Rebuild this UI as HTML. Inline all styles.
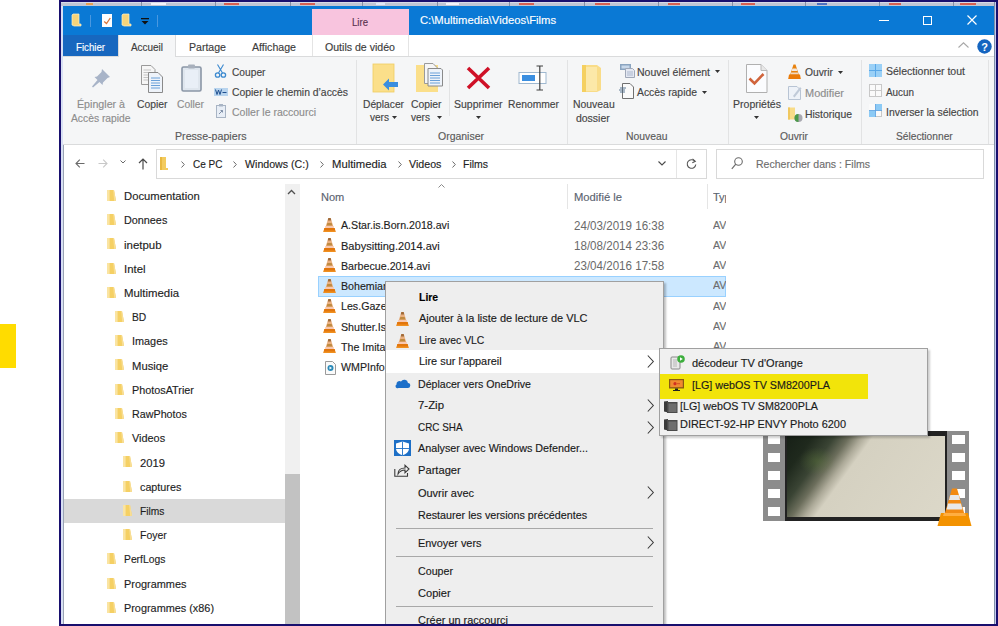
<!DOCTYPE html>
<html><head><meta charset="utf-8"><style>
html,body{margin:0;padding:0;width:998px;height:626px;overflow:hidden;background:#fff;position:relative}
.t{position:absolute;white-space:nowrap;font-family:"Liberation Sans",sans-serif;line-height:normal;transform-origin:0 0;-webkit-text-stroke:0.15px currentColor}
svg{position:absolute;overflow:visible}
</style></head><body>
<div style="position:absolute;left:0px;top:0px;width:998px;height:626px;background:#ffffff;"></div>
<div style="position:absolute;left:0px;top:324px;width:16px;height:44px;background:#FFDC00;"></div>
<div style="position:absolute;left:59px;top:0px;width:939px;height:626px;background:#180f6e;"></div>
<div style="position:absolute;left:61px;top:2px;width:935px;height:622px;background:#ffffff;"></div>
<div style="position:absolute;left:61px;top:2px;width:2px;height:622px;background:#d8e0f4;"></div>
<div style="position:absolute;left:63px;top:6px;width:1px;height:618px;background:#9aa4b4;"></div>
<div style="position:absolute;left:61px;top:2px;width:935px;height:4px;background:#c0c6d4;"></div>
<div style="position:absolute;left:61px;top:2px;width:935px;height:1px;background:#d8dae8;"></div>
<div style="position:absolute;left:141px;top:2px;width:1px;height:4px;background:#8890a4;"></div>
<div style="position:absolute;left:215px;top:2px;width:1px;height:4px;background:#8890a4;"></div>
<div style="position:absolute;left:290px;top:2px;width:1px;height:4px;background:#8890a4;"></div>
<div style="position:absolute;left:362px;top:2px;width:1px;height:4px;background:#8890a4;"></div>
<div style="position:absolute;left:437px;top:2px;width:1px;height:4px;background:#8890a4;"></div>
<div style="position:absolute;left:509px;top:2px;width:1px;height:4px;background:#8890a4;"></div>
<div style="position:absolute;left:584px;top:2px;width:1px;height:4px;background:#8890a4;"></div>
<div style="position:absolute;left:658px;top:2px;width:1px;height:4px;background:#8890a4;"></div>
<div style="position:absolute;left:732px;top:2px;width:1px;height:4px;background:#8890a4;"></div>
<div style="position:absolute;left:805px;top:2px;width:1px;height:4px;background:#8890a4;"></div>
<div style="position:absolute;left:879px;top:2px;width:1px;height:4px;background:#8890a4;"></div>
<div style="position:absolute;left:953px;top:2px;width:1px;height:4px;background:#8890a4;"></div>
<div style="position:absolute;left:86px;top:3px;width:7px;height:1.5px;background:#e8a050;"></div>
<div style="position:absolute;left:151px;top:3px;width:15px;height:1.5px;background:#f4f4fa;"></div>
<div style="position:absolute;left:224px;top:3px;width:15px;height:1.5px;background:#d86050;"></div>
<div style="position:absolute;left:300px;top:3px;width:15px;height:1.5px;background:#d86050;"></div>
<div style="position:absolute;left:376px;top:3px;width:9px;height:1.5px;background:#e0e8f8;"></div>
<div style="position:absolute;left:446px;top:3px;width:13px;height:1.5px;background:#f4f4fa;"></div>
<div style="position:absolute;left:519px;top:3px;width:15px;height:1.5px;background:#d86050;"></div>
<div style="position:absolute;left:595px;top:3px;width:15px;height:1.5px;background:#d86050;"></div>
<div style="position:absolute;left:668px;top:3px;width:12px;height:1.5px;background:#d86050;"></div>
<div style="position:absolute;left:741px;top:3px;width:14px;height:1.5px;background:#d86050;"></div>
<div style="position:absolute;left:817px;top:3px;width:10px;height:1.5px;background:#5070c0;"></div>
<div style="position:absolute;left:889px;top:3px;width:12px;height:1.5px;background:#d86050;"></div>
<div style="position:absolute;left:960px;top:3px;width:16px;height:1.5px;background:#d86050;"></div>
<div style="position:absolute;left:63px;top:6px;width:931px;height:29px;background:#0a79d5;"></div>
<div style="position:absolute;left:994px;top:2px;width:2px;height:622px;background:#c8d4f0;"></div>
<svg style="left:72px;top:14px;" width="10" height="13" viewBox="0 0 10 13"><path d="M1 0H7V10H9V12H2L0 11V1Z" fill="#f6d47a" stroke="#fff4c8" stroke-width="0.7"/></svg>
<div style="position:absolute;left:90px;top:15px;width:1px;height:12px;background:#4a98e0;"></div>
<svg style="left:102px;top:14px;" width="10" height="13" viewBox="0 0 10 13"><rect x="0" y="0" width="10" height="13" fill="#fdfdfd"/><path d="M2.2 7.5L4.5 9.5L8.3 4" fill="none" stroke="#d8743a" stroke-width="1.3"/></svg>
<svg style="left:122px;top:14px;" width="10" height="13" viewBox="0 0 10 13"><path d="M1 0H7V10H9V12H2L0 11V1Z" fill="#f6d47a" stroke="#fff4c8" stroke-width="0.7"/></svg>
<svg style="left:141px;top:18px;" width="8" height="7" viewBox="0 0 8 7"><rect x="0" y="0" width="8" height="1.3" fill="#111"/><path d="M0.5 3H7.5L4 6.5Z" fill="#111"/></svg>
<div style="position:absolute;left:157px;top:15px;width:1px;height:12px;background:#4a98e0;"></div>
<div style="position:absolute;left:312px;top:9px;width:97px;height:26px;background:#f8c4de;"></div>
<span class=t style="left:352.2px;top:16.75px;font-size:10px;color:#5a3350;font-weight:normal;transform:scaleX(0.9588);">Lire</span>
<span class=t style="left:420px;top:14.24px;font-size:11px;color:#ffffff;font-weight:normal;transform:scaleX(1.0221);">C:\Multimedia\Videos\Films</span>
<div style="position:absolute;left:879px;top:20px;width:10px;height:1.2px;background:#ffffff;"></div>
<div style="position:absolute;left:923px;top:16px;width:9px;height:9px;background:transparent;border:1.2px solid #fff;box-sizing:border-box"></div>
<svg style="left:967px;top:15px;" width="10" height="10" viewBox="0 0 10 10"><path d="M0.5 0.5L9.5 9.5M9.5 0.5L0.5 9.5" stroke="#fff" stroke-width="1.2"/></svg>
<div style="position:absolute;left:63px;top:35px;width:931px;height:21px;background:#ffffff;"></div>
<div style="position:absolute;left:63px;top:35px;width:55px;height:21px;background:#1767bf;"></div>
<span class=t style="left:76px;top:40.50px;font-size:10.5px;color:#ffffff;font-weight:normal;transform:scaleX(0.9202);">Fichier</span>
<div style="position:absolute;left:118px;top:35px;width:58px;height:22px;background:#f5f6f7;border-left:1px solid #dadbdc;border-right:1px solid #dadbdc;box-sizing:border-box"></div>
<span class=t style="left:131px;top:40.50px;font-size:10.5px;color:#3c3c3c;font-weight:normal;transform:scaleX(0.9451);">Accueil</span>
<span class=t style="left:189px;top:40.50px;font-size:10.5px;color:#3c3c3c;font-weight:normal;transform:scaleX(1.0059);">Partage</span>
<span class=t style="left:252px;top:40.50px;font-size:10.5px;color:#3c3c3c;font-weight:normal;transform:scaleX(1.0093);">Affichage</span>
<div style="position:absolute;left:312px;top:35px;width:97px;height:21px;background:#ffffff;border-left:1px solid #e4e4e4;border-right:1px solid #e4e4e4;box-sizing:border-box"></div>
<span class=t style="left:325px;top:40.50px;font-size:10.5px;color:#3c3c3c;font-weight:normal;transform:scaleX(1.0076);">Outils de vidéo</span>
<svg style="left:958px;top:42px;" width="11" height="6" viewBox="0 0 11 6"><path d="M0.5 5.5L5.5 0.8L10.5 5.5" fill="none" stroke="#a8a8a8" stroke-width="1.1"/></svg>
<svg style="left:977px;top:39px;" width="15" height="15" viewBox="0 0 15 15"><circle cx="7.5" cy="7.5" r="7.2" fill="#1565c0"/><text x="7.5" y="12" font-family="Liberation Sans" font-weight="bold" font-size="11" fill="#fff" text-anchor="middle">?</text></svg>
<div style="position:absolute;left:63px;top:56px;width:931px;height:89px;background:#f5f6f7;"></div>
<div style="position:absolute;left:63px;top:56px;width:931px;height:1px;background:#dadbdc;"></div>
<div style="position:absolute;left:119px;top:56px;width:56px;height:1px;background:#f5f6f7;"></div>
<div style="position:absolute;left:63px;top:144px;width:931px;height:1px;background:#dadbdc;"></div>
<div style="position:absolute;left:356px;top:60px;width:1px;height:84px;background:#e2e3e4;"></div>
<div style="position:absolute;left:567px;top:60px;width:1px;height:84px;background:#e2e3e4;"></div>
<div style="position:absolute;left:728px;top:60px;width:1px;height:84px;background:#e2e3e4;"></div>
<div style="position:absolute;left:861px;top:60px;width:1px;height:84px;background:#e2e3e4;"></div>
<div style="position:absolute;left:988px;top:60px;width:1px;height:84px;background:#e2e3e4;"></div>
<svg style="left:91px;top:68px;" width="20" height="20" viewBox="0 0 20 20"><path d="M11 1L19 9L16.5 10L12 14.5L11.5 17L8.5 14L2 19.5L1 18.5L6.5 12L3.5 9L6 8.5L10.5 4Z" fill="#a8b4c8"/></svg>
<span class=t style="left:76.5px;top:98.00px;font-size:10.5px;color:#8d8d8d;font-weight:normal;transform:scaleX(1.0152);">Épingler à</span>
<span class=t style="left:70.5px;top:111.50px;font-size:10.5px;color:#8d8d8d;font-weight:normal;transform:scaleX(0.9802);">Accès rapide</span>
<svg style="left:141px;top:65px;" width="24" height="28" viewBox="0 0 24 28"><path d="M0.5 0.5H10L14 4.5V19.5H0.5Z" fill="#f6f6f6" stroke="#9a9a9a"/><path d="M2.5 5H10M2.5 7.5H11M2.5 10H11M2.5 12.5H11M2.5 15H11" stroke="#c4c4c4"/><path d="M7.5 7.5H17L21.5 12V27.5H7.5Z" fill="#eef3fa" stroke="#8a8a8a"/><path d="M10 13H19M10 15.5H19M10 18H19M10 20.5H19M10 23H19" stroke="#6aa0d8"/></svg>
<span class=t style="left:137px;top:98.00px;font-size:10.5px;color:#444444;font-weight:normal;transform:scaleX(0.9859);">Copier</span>
<svg style="left:181px;top:64px;" width="21" height="28" viewBox="0 0 21 28"><rect x="1" y="3" width="19" height="24" rx="1.5" fill="#dfe6ee" stroke="#8a96a6" stroke-width="1.6"/><rect x="4" y="6" width="13" height="18" fill="#e9eff7"/><rect x="7" y="0.5" width="7" height="4" rx="1" fill="#a8b0bc"/></svg>
<span class=t style="left:177px;top:98.00px;font-size:10.5px;color:#8d8d8d;font-weight:normal;transform:scaleX(0.9841);">Coller</span>
<svg style="left:215px;top:64px;" width="11" height="14" viewBox="0 0 11 14"><circle cx="2.6" cy="11" r="2.2" fill="none" stroke="#3c8ad0" stroke-width="1.3"/><circle cx="8.4" cy="11" r="2.2" fill="none" stroke="#3c8ad0" stroke-width="1.3"/><path d="M3.5 9L8.5 0.5M7.5 9L2.5 0.5" stroke="#3c8ad0" stroke-width="1.1"/></svg>
<span class=t style="left:231.5px;top:65.50px;font-size:10.5px;color:#444444;font-weight:normal;transform:scaleX(0.9723);">Couper</span>
<svg style="left:214px;top:88px;" width="14" height="8" viewBox="0 0 14 8"><rect x="0" y="0" width="14" height="8" fill="#b8d4ee"/><path d="M1.5 1.5L3 6.5L4.5 2L6 6.5L7.5 1.5M8.5 4.5H12.5" fill="none" stroke="#1f4f8f" stroke-width="1"/></svg>
<span class=t style="left:231.5px;top:86.20px;font-size:10.5px;color:#444444;font-weight:normal;transform:scaleX(0.9888);">Copier le chemin d’accès</span>
<svg style="left:216px;top:104px;" width="10" height="14" viewBox="0 0 10 14"><rect x="0.5" y="1.5" width="9" height="12" fill="#e8eef6" stroke="#a8b4c4"/><rect x="3" y="0" width="4" height="2.5" fill="#a8b4c4"/><path d="M3 10L6.5 6.5M4.5 6.5H6.5V8.5" fill="none" stroke="#8090a8"/></svg>
<span class=t style="left:231.5px;top:106.00px;font-size:10.5px;color:#8d8d8d;font-weight:normal;transform:scaleX(0.9996);">Coller le raccourci</span>
<span class=t style="left:175px;top:129.80px;font-size:10.5px;color:#5a5a5a;font-weight:normal;transform:scaleX(1.0124);">Presse-papiers</span>
<svg style="left:373px;top:64px;" width="26" height="29" viewBox="0 0 26 29"><rect x="0" y="0" width="21" height="28" fill="#fbdf8a"/><rect x="0" y="0" width="21" height="28" fill="none" stroke="#f0cc60" stroke-width="0.8"/><path d="M10 20.5L16 14.5V18H25V23H16V26.5Z" fill="#3a8ee0"/></svg>
<span class=t style="left:363px;top:97.80px;font-size:10.5px;color:#444444;font-weight:normal;transform:scaleX(0.9755);">Déplacer</span>
<span class=t style="left:370px;top:111.20px;font-size:10.5px;color:#444444;font-weight:normal;transform:scaleX(0.9575);">vers</span>
<svg style="left:392px;top:116px;" width="5" height="3" viewBox="0 0 5 3"><path d="M0 0H5L2.5 3Z" fill="#333"/></svg>
<svg style="left:416px;top:63px;" width="27" height="30" viewBox="0 0 27 30"><rect x="0" y="2" width="22" height="27" fill="#fbdf8a"/><path d="M8.5 0.5H17L21 4.5V20.5H8.5Z" fill="#f6f6f6" stroke="#9a9a9a"/><path d="M12 5.5H25L26.5 7V23H12Z" fill="#eef3fa" stroke="#8a8a8a"/><path d="M14 10H24M14 12.5H24M14 15H24M14 17.5H24M14 20H24" stroke="#6aa0d8"/></svg>
<span class=t style="left:411px;top:97.80px;font-size:10.5px;color:#444444;font-weight:normal;transform:scaleX(0.9859);">Copier</span>
<span class=t style="left:411px;top:111.20px;font-size:10.5px;color:#444444;font-weight:normal;transform:scaleX(0.9575);">vers</span>
<svg style="left:437px;top:116px;" width="5" height="3" viewBox="0 0 5 3"><path d="M0 0H5L2.5 3Z" fill="#333"/></svg>
<div style="position:absolute;left:449px;top:70px;width:1px;height:46px;background:#e2e3e4;"></div>
<svg style="left:466px;top:66px;" width="25" height="24" viewBox="0 0 25 24"><path d="M2 2L23 22M23 2L2 22" stroke="#cf1127" stroke-width="3.6"/></svg>
<span class=t style="left:454px;top:98.00px;font-size:10.5px;color:#444444;font-weight:normal;transform:scaleX(1.0013);">Supprimer</span>
<svg style="left:476px;top:116px;" width="5" height="3" viewBox="0 0 5 3"><path d="M0 0H5L2.5 3Z" fill="#333"/></svg>
<svg style="left:518px;top:65px;" width="29" height="26" viewBox="0 0 29 26"><rect x="1" y="7.5" width="27" height="11" fill="#fff" stroke="#9fb8d0"/><rect x="4" y="10" width="13" height="6" fill="#3a8ee0"/><path d="M18.5 1H25M21.8 1V25M18.5 25H25" fill="none" stroke="#404040" stroke-width="1.2"/></svg>
<span class=t style="left:507.6px;top:98.00px;font-size:10.5px;color:#444444;font-weight:normal;transform:scaleX(0.9819);">Renommer</span>
<span class=t style="left:438px;top:129.80px;font-size:10.5px;color:#5a5a5a;font-weight:normal;transform:scaleX(0.9976);">Organiser</span>
<svg style="left:582px;top:65px;" width="20" height="27" viewBox="0 0 20 27"><path d="M0 0H15L19 3V25L15 27H0Z" fill="#f9dc88"/><path d="M4 2H15V26H4Z" fill="#fce8a8"/><path d="M0 0H4V27H0Z" fill="#f5d060"/></svg>
<span class=t style="left:572.7px;top:97.80px;font-size:10.5px;color:#444444;font-weight:normal;transform:scaleX(0.9921);">Nouveau</span>
<span class=t style="left:576.2px;top:111.50px;font-size:10.5px;color:#444444;font-weight:normal;transform:scaleX(0.9953);">dossier</span>
<svg style="left:620px;top:64px;" width="16" height="14" viewBox="0 0 16 14"><rect x="0" y="0" width="11" height="6" fill="#8aa4c0"/><rect x="1.5" y="1.5" width="8" height="3" fill="#c8d8ea"/><path d="M5.5 4.5H12.5L14.5 6.5V13.5H5.5Z" fill="#e4e8f2" stroke="#a0a8b8"/><rect x="7" y="7" width="6" height="5" fill="#c8d0e0"/></svg>
<span class=t style="left:637px;top:65.50px;font-size:10.5px;color:#444444;font-weight:normal;transform:scaleX(1.0004);">Nouvel élément</span>
<svg style="left:715px;top:70px;" width="5" height="3" viewBox="0 0 5 3"><path d="M0 0H5L2.5 3Z" fill="#333"/></svg>
<svg style="left:619px;top:83px;" width="16" height="16" viewBox="0 0 16 16"><path d="M3.5 0.5H11L14.5 4V15.5H3.5Z" fill="#fafafa" stroke="#707070"/><path d="M1 5H7M0 7H6M1 9H6" stroke="#4a6a88" stroke-width="0.9"/></svg>
<span class=t style="left:637px;top:85.80px;font-size:10.5px;color:#444444;font-weight:normal;transform:scaleX(0.9884);">Accès rapide</span>
<svg style="left:702px;top:91px;" width="5" height="3" viewBox="0 0 5 3"><path d="M0 0H5L2.5 3Z" fill="#333"/></svg>
<span class=t style="left:626px;top:129.80px;font-size:10.5px;color:#5a5a5a;font-weight:normal;transform:scaleX(0.9874);">Nouveau</span>
<svg style="left:746px;top:64px;" width="22" height="29" viewBox="0 0 22 29"><path d="M0.5 0.5H15L21 6.5V28.5H0.5Z" fill="#fbfcfe" stroke="#b0b0b0"/><path d="M15 0.5V6.5H21" fill="#e8e8e8" stroke="#b8b8b8"/><path d="M3.5 14.5L8.5 19.5L17.5 10" fill="none" stroke="#d0643c" stroke-width="2.6"/></svg>
<span class=t style="left:733.3px;top:97.80px;font-size:10.5px;color:#444444;font-weight:normal;transform:scaleX(1.0029);">Propriétés</span>
<svg style="left:754px;top:116px;" width="5" height="3" viewBox="0 0 5 3"><path d="M0 0H5L2.5 3Z" fill="#333"/></svg>
<svg style="left:788px;top:64px;" width="13" height="15" viewBox="0 0 13 15"><path d="M5.5 0.5H7.5L11 11H2Z" fill="#e8820e"/><path d="M4.4 4.5H8.6L9.4 7H3.6Z" fill="#f4e8dc"/><path d="M3 8.5H10L10.6 10.5H2.4Z" fill="#f0d8c0"/><path d="M1 10.5H12L12.8 15H0.2Z" fill="#ea7a08"/></svg>
<span class=t style="left:805px;top:66.00px;font-size:10.5px;color:#444444;font-weight:normal;transform:scaleX(0.9792);">Ouvrir</span>
<svg style="left:838px;top:71px;" width="5" height="3" viewBox="0 0 5 3"><path d="M0 0H5L2.5 3Z" fill="#333"/></svg>
<svg style="left:788px;top:85px;" width="14" height="15" viewBox="0 0 14 15"><path d="M0.5 1.5H9L12.5 5V14.5H0.5Z" fill="#eef2f8" stroke="#b8c4d4"/><path d="M5 11L12 2L13.5 3.5L6.5 12.5Z" fill="#c0cad8"/></svg>
<span class=t style="left:805px;top:87.10px;font-size:10.5px;color:#8d8d8d;font-weight:normal;transform:scaleX(1.0439);">Modifier</span>
<svg style="left:788px;top:107px;" width="15" height="15" viewBox="0 0 15 15"><path d="M0 0.5H7V12.5H0Z" fill="#f8dc88"/><path d="M0 0.5H2V12.5H0Z" fill="#f0c860"/><circle cx="10.5" cy="11" r="4" fill="#a8a8b0"/><path d="M10.5 7A4 4 0 0 0 10.5 15Z" fill="#4a9a48"/></svg>
<span class=t style="left:805px;top:108.20px;font-size:10.5px;color:#444444;font-weight:normal;transform:scaleX(0.9941);">Historique</span>
<span class=t style="left:779.7px;top:129.80px;font-size:10.5px;color:#5a5a5a;font-weight:normal;transform:scaleX(0.9792);">Ouvrir</span>
<svg style="left:869px;top:64px;" width="13" height="13" viewBox="0 0 13 13"><rect x="0" y="0" width="13" height="13" fill="#9ad0f6"/><path d="M6.5 0V13M0 6.5H13" stroke="#5aa8e8" stroke-width="1"/></svg>
<span class=t style="left:886px;top:65.20px;font-size:10.5px;color:#444444;font-weight:normal;transform:scaleX(1.0024);">Sélectionner tout</span>
<svg style="left:869px;top:84px;" width="13" height="13" viewBox="0 0 13 13"><rect x="0.5" y="0.5" width="12" height="12" fill="#fafafa" stroke="#c8c8c8"/><path d="M6.5 0V13M0 6.5H13" stroke="#c8c8c8" stroke-width="1"/></svg>
<span class=t style="left:886px;top:85.50px;font-size:10.5px;color:#444444;font-weight:normal;transform:scaleX(0.9402);">Aucun</span>
<svg style="left:869px;top:104px;" width="13" height="13" viewBox="0 0 13 13"><rect x="0.5" y="0.5" width="12" height="12" fill="#fafafa" stroke="#c8c8c8"/><rect x="0" y="0" width="6.5" height="6.5" fill="#fafafa"/><rect x="6.5" y="0" width="6.5" height="6.5" fill="#8ccaf5"/><rect x="0" y="6.5" width="6.5" height="6.5" fill="#8ccaf5"/><path d="M6.5 0V13M0 6.5H13" stroke="#5aa0e0" stroke-width="0.8"/></svg>
<span class=t style="left:886px;top:105.70px;font-size:10.5px;color:#444444;font-weight:normal;transform:scaleX(0.9915);">Inverser la sélection</span>
<span class=t style="left:896px;top:129.80px;font-size:10.5px;color:#5a5a5a;font-weight:normal;transform:scaleX(0.9713);">Sélectionner</span>
<svg style="left:75px;top:159px;" width="10" height="9" viewBox="0 0 10 9"><path d="M9.5 4.5H1M4.8 0.7L1 4.5L4.8 8.3" fill="none" stroke="#6a6a6a" stroke-width="1.1"/></svg>
<svg style="left:98px;top:159px;" width="10" height="9" viewBox="0 0 10 9"><path d="M0.5 4.5H9M5.2 0.7L9 4.5L5.2 8.3" fill="none" stroke="#c8c8c8" stroke-width="1.1"/></svg>
<svg style="left:120px;top:160px;" width="6" height="4" viewBox="0 0 6 4"><path d="M0.5 0.5L3 3L5.5 0.5" fill="none" stroke="#6a6a6a" stroke-width="1"/></svg>
<svg style="left:138px;top:158px;" width="10" height="12" viewBox="0 0 10 12"><path d="M5 11.5V1M1 5L5 1L9 5" fill="none" stroke="#4a4a4a" stroke-width="1.2"/></svg>
<div style="position:absolute;left:156px;top:149px;width:551px;height:30px;background:#ffffff;border:1px solid #d9d9d9;box-sizing:border-box"></div>
<div style="position:absolute;left:676px;top:150px;width:1px;height:28px;background:#e5e5e5;"></div>
<svg style="left:160px;top:157px;" width="9" height="14" viewBox="0 0 9 14"><path d="M0 0H6V11H8V13H1L0 12Z" fill="#f3cb5e"/><path d="M0 0H2V13H0Z" fill="#e8b840"/></svg>
<svg style="left:181px;top:161px;" width="4" height="7" viewBox="0 0 4 7"><path d="M0.5 0.5L3.3 3.5L0.5 6.5" fill="none" stroke="#6a6a6a" stroke-width="1"/></svg>
<svg style="left:233px;top:161px;" width="4" height="7" viewBox="0 0 4 7"><path d="M0.5 0.5L3.3 3.5L0.5 6.5" fill="none" stroke="#6a6a6a" stroke-width="1"/></svg>
<svg style="left:320px;top:161px;" width="4" height="7" viewBox="0 0 4 7"><path d="M0.5 0.5L3.3 3.5L0.5 6.5" fill="none" stroke="#6a6a6a" stroke-width="1"/></svg>
<svg style="left:397.5px;top:161px;" width="4" height="7" viewBox="0 0 4 7"><path d="M0.5 0.5L3.3 3.5L0.5 6.5" fill="none" stroke="#6a6a6a" stroke-width="1"/></svg>
<svg style="left:452px;top:161px;" width="4" height="7" viewBox="0 0 4 7"><path d="M0.5 0.5L3.3 3.5L0.5 6.5" fill="none" stroke="#6a6a6a" stroke-width="1"/></svg>
<span class=t style="left:193px;top:157.59px;font-size:11.5px;color:#1e1e1e;font-weight:normal;transform:scaleX(0.8708);">Ce PC</span>
<span class=t style="left:245px;top:157.59px;font-size:11.5px;color:#1e1e1e;font-weight:normal;transform:scaleX(0.9230);">Windows (C:)</span>
<span class=t style="left:331.5px;top:157.59px;font-size:11.5px;color:#1e1e1e;font-weight:normal;transform:scaleX(0.9801);">Multimedia</span>
<span class=t style="left:408.6px;top:157.59px;font-size:11.5px;color:#1e1e1e;font-weight:normal;transform:scaleX(0.9265);">Videos</span>
<span class=t style="left:463px;top:157.59px;font-size:11.5px;color:#1e1e1e;font-weight:normal;transform:scaleX(0.9101);">Films</span>
<svg style="left:658px;top:161px;" width="8" height="5" viewBox="0 0 8 5"><path d="M0.5 0.5L4 4L7.5 0.5" fill="none" stroke="#4a4a4a" stroke-width="1.1"/></svg>
<svg style="left:686px;top:158px;" width="11" height="12" viewBox="0 0 11 12"><path d="M8.8 3.2A4.3 4.3 0 1 0 9.8 6.5" fill="none" stroke="#555" stroke-width="1.1"/><path d="M6.5 0.8L9.3 3.3L6.3 4.8" fill="none" stroke="#555" stroke-width="1.1"/></svg>
<div style="position:absolute;left:716px;top:149px;width:268px;height:30px;background:#ffffff;border:1px solid #d9d9d9;box-sizing:border-box"></div>
<svg style="left:731px;top:157px;" width="12" height="13" viewBox="0 0 12 13"><circle cx="7.5" cy="4.5" r="3.8" fill="none" stroke="#6a6a6a" stroke-width="1.1"/><path d="M4.8 7.2L0.8 11.8" stroke="#6a6a6a" stroke-width="1.2"/></svg>
<span class=t style="left:756px;top:158.09px;font-size:11.5px;color:#6d6d6d;font-weight:normal;transform:scaleX(0.9147);">Rechercher dans : Films</span>
<div style="position:absolute;left:285px;top:184px;width:15px;height:440px;background:#f0f0f0;"></div>
<div style="position:absolute;left:285px;top:474px;width:15px;height:150px;background:#c2c2c2;"></div>
<svg style="left:287px;top:189px;" width="9" height="6" viewBox="0 0 9 6"><path d="M1 5L4.5 1.5L8 5" fill="none" stroke="#505050" stroke-width="1.3"/></svg>
<div style="position:absolute;left:64px;top:499px;width:221px;height:24px;background:#d9d9d9;"></div>
<svg style="left:106.8px;top:189.9px;" width="10" height="12" viewBox="0 0 10 12"><path d="M0 0H7L8.8 9.8V11H0Z" fill="#f5d064"/><path d="M0 0H2.6V11H0Z" fill="#fae4a2"/><path d="M6.2 0H7L8.8 9.8V11H7.2Z" fill="#f8de96"/></svg>
<span class=t style="left:124.0px;top:190.09px;font-size:11.5px;color:#1e1e1e;font-weight:normal;transform:scaleX(0.9798);">Documentation</span>
<svg style="left:106.8px;top:214.20000000000002px;" width="10" height="12" viewBox="0 0 10 12"><path d="M0 0H7L8.8 9.8V11H0Z" fill="#f5d064"/><path d="M0 0H2.6V11H0Z" fill="#fae4a2"/><path d="M6.2 0H7L8.8 9.8V11H7.2Z" fill="#f8de96"/></svg>
<span class=t style="left:124.0px;top:214.39px;font-size:11.5px;color:#1e1e1e;font-weight:normal;transform:scaleX(0.9403);">Donnees</span>
<svg style="left:106.8px;top:238.4px;" width="10" height="12" viewBox="0 0 10 12"><path d="M0 0H7L8.8 9.8V11H0Z" fill="#f5d064"/><path d="M0 0H2.6V11H0Z" fill="#fae4a2"/><path d="M6.2 0H7L8.8 9.8V11H7.2Z" fill="#f8de96"/></svg>
<span class=t style="left:124.0px;top:238.59px;font-size:11.5px;color:#1e1e1e;font-weight:normal;transform:scaleX(0.9938);">inetpub</span>
<svg style="left:106.8px;top:262.59999999999997px;" width="10" height="12" viewBox="0 0 10 12"><path d="M0 0H7L8.8 9.8V11H0Z" fill="#f5d064"/><path d="M0 0H2.6V11H0Z" fill="#fae4a2"/><path d="M6.2 0H7L8.8 9.8V11H7.2Z" fill="#f8de96"/></svg>
<span class=t style="left:124.0px;top:262.79px;font-size:11.5px;color:#1e1e1e;font-weight:normal;transform:scaleX(0.9885);">Intel</span>
<svg style="left:106.8px;top:286.9px;" width="10" height="12" viewBox="0 0 10 12"><path d="M0 0H7L8.8 9.8V11H0Z" fill="#f5d064"/><path d="M0 0H2.6V11H0Z" fill="#fae4a2"/><path d="M6.2 0H7L8.8 9.8V11H7.2Z" fill="#f8de96"/></svg>
<span class=t style="left:124.0px;top:287.09px;font-size:11.5px;color:#1e1e1e;font-weight:normal;transform:scaleX(0.9890);">Multimedia</span>
<svg style="left:114.89999999999999px;top:310.9px;" width="10" height="12" viewBox="0 0 10 12"><path d="M0 0H7L8.8 9.8V11H0Z" fill="#f5d064"/><path d="M0 0H2.6V11H0Z" fill="#fae4a2"/><path d="M6.2 0H7L8.8 9.8V11H7.2Z" fill="#f8de96"/></svg>
<span class=t style="left:132.1px;top:311.09px;font-size:11.5px;color:#1e1e1e;font-weight:normal;transform:scaleX(0.8946);">BD</span>
<svg style="left:114.89999999999999px;top:335.2px;" width="10" height="12" viewBox="0 0 10 12"><path d="M0 0H7L8.8 9.8V11H0Z" fill="#f5d064"/><path d="M0 0H2.6V11H0Z" fill="#fae4a2"/><path d="M6.2 0H7L8.8 9.8V11H7.2Z" fill="#f8de96"/></svg>
<span class=t style="left:132.1px;top:335.39px;font-size:11.5px;color:#1e1e1e;font-weight:normal;transform:scaleX(0.9438);">Images</span>
<svg style="left:114.89999999999999px;top:359.4px;" width="10" height="12" viewBox="0 0 10 12"><path d="M0 0H7L8.8 9.8V11H0Z" fill="#f5d064"/><path d="M0 0H2.6V11H0Z" fill="#fae4a2"/><path d="M6.2 0H7L8.8 9.8V11H7.2Z" fill="#f8de96"/></svg>
<span class=t style="left:132.1px;top:359.59px;font-size:11.5px;color:#1e1e1e;font-weight:normal;transform:scaleX(0.9790);">Musiqe</span>
<svg style="left:114.89999999999999px;top:383.7px;" width="10" height="12" viewBox="0 0 10 12"><path d="M0 0H7L8.8 9.8V11H0Z" fill="#f5d064"/><path d="M0 0H2.6V11H0Z" fill="#fae4a2"/><path d="M6.2 0H7L8.8 9.8V11H7.2Z" fill="#f8de96"/></svg>
<span class=t style="left:132.1px;top:383.89px;font-size:11.5px;color:#1e1e1e;font-weight:normal;transform:scaleX(0.9403);">PhotosATrier</span>
<svg style="left:114.89999999999999px;top:408.0px;" width="10" height="12" viewBox="0 0 10 12"><path d="M0 0H7L8.8 9.8V11H0Z" fill="#f5d064"/><path d="M0 0H2.6V11H0Z" fill="#fae4a2"/><path d="M6.2 0H7L8.8 9.8V11H7.2Z" fill="#f8de96"/></svg>
<span class=t style="left:132.1px;top:408.19px;font-size:11.5px;color:#1e1e1e;font-weight:normal;transform:scaleX(0.9335);">RawPhotos</span>
<svg style="left:114.89999999999999px;top:432.2px;" width="10" height="12" viewBox="0 0 10 12"><path d="M0 0H7L8.8 9.8V11H0Z" fill="#f5d064"/><path d="M0 0H2.6V11H0Z" fill="#fae4a2"/><path d="M6.2 0H7L8.8 9.8V11H7.2Z" fill="#f8de96"/></svg>
<span class=t style="left:132.1px;top:432.39px;font-size:11.5px;color:#1e1e1e;font-weight:normal;transform:scaleX(0.9466);">Videos</span>
<svg style="left:123.0px;top:456.4px;" width="10" height="12" viewBox="0 0 10 12"><path d="M0 0H7L8.8 9.8V11H0Z" fill="#f5d064"/><path d="M0 0H2.6V11H0Z" fill="#fae4a2"/><path d="M6.2 0H7L8.8 9.8V11H7.2Z" fill="#f8de96"/></svg>
<span class=t style="left:140.2px;top:456.59px;font-size:11.5px;color:#1e1e1e;font-weight:normal;transform:scaleX(0.9768);">2019</span>
<svg style="left:123.0px;top:480.59999999999997px;" width="10" height="12" viewBox="0 0 10 12"><path d="M0 0H7L8.8 9.8V11H0Z" fill="#f5d064"/><path d="M0 0H2.6V11H0Z" fill="#fae4a2"/><path d="M6.2 0H7L8.8 9.8V11H7.2Z" fill="#f8de96"/></svg>
<span class=t style="left:140.2px;top:480.79px;font-size:11.5px;color:#1e1e1e;font-weight:normal;transform:scaleX(0.9363);">captures</span>
<svg style="left:123.0px;top:504.79999999999995px;" width="10" height="12" viewBox="0 0 10 12"><path d="M0 0H7L8.8 9.8V11H0Z" fill="#f5d064"/><path d="M0 0H2.6V11H0Z" fill="#fae4a2"/><path d="M6.2 0H7L8.8 9.8V11H7.2Z" fill="#f8de96"/></svg>
<span class=t style="left:140.2px;top:504.99px;font-size:11.5px;color:#1e1e1e;font-weight:normal;transform:scaleX(0.8883);">Films</span>
<svg style="left:123.0px;top:529.0px;" width="10" height="12" viewBox="0 0 10 12"><path d="M0 0H7L8.8 9.8V11H0Z" fill="#f5d064"/><path d="M0 0H2.6V11H0Z" fill="#fae4a2"/><path d="M6.2 0H7L8.8 9.8V11H7.2Z" fill="#f8de96"/></svg>
<span class=t style="left:140.2px;top:529.19px;font-size:11.5px;color:#1e1e1e;font-weight:normal;transform:scaleX(0.9080);">Foyer</span>
<svg style="left:106.8px;top:553.3px;" width="10" height="12" viewBox="0 0 10 12"><path d="M0 0H7L8.8 9.8V11H0Z" fill="#f5d064"/><path d="M0 0H2.6V11H0Z" fill="#fae4a2"/><path d="M6.2 0H7L8.8 9.8V11H7.2Z" fill="#f8de96"/></svg>
<span class=t style="left:124.0px;top:553.49px;font-size:11.5px;color:#1e1e1e;font-weight:normal;transform:scaleX(0.8972);">PerfLogs</span>
<svg style="left:106.8px;top:577.6px;" width="10" height="12" viewBox="0 0 10 12"><path d="M0 0H7L8.8 9.8V11H0Z" fill="#f5d064"/><path d="M0 0H2.6V11H0Z" fill="#fae4a2"/><path d="M6.2 0H7L8.8 9.8V11H7.2Z" fill="#f8de96"/></svg>
<span class=t style="left:124.0px;top:577.79px;font-size:11.5px;color:#1e1e1e;font-weight:normal;transform:scaleX(0.9479);">Programmes</span>
<svg style="left:106.8px;top:601.9px;" width="10" height="12" viewBox="0 0 10 12"><path d="M0 0H7L8.8 9.8V11H0Z" fill="#f5d064"/><path d="M0 0H2.6V11H0Z" fill="#fae4a2"/><path d="M6.2 0H7L8.8 9.8V11H7.2Z" fill="#f8de96"/></svg>
<span class=t style="left:124.0px;top:602.09px;font-size:11.5px;color:#1e1e1e;font-weight:normal;transform:scaleX(0.9452);">Programmes (x86)</span>
<span class=t style="left:320.7px;top:191.04px;font-size:11px;color:#5b6470;font-weight:normal;transform:scaleX(1.0028);">Nom</span>
<svg style="left:438px;top:184px;" width="7" height="4" viewBox="0 0 7 4"><path d="M0.5 3.5L3.5 0.5L6.5 3.5" fill="none" stroke="#8a8a8a" stroke-width="1"/></svg>
<div style="position:absolute;left:567px;top:184px;width:1px;height:25px;background:#e5e5e5;"></div>
<span class=t style="left:573.8px;top:190.64px;font-size:11px;color:#5b6470;font-weight:normal;transform:scaleX(1.0196);">Modifié le</span>
<div style="position:absolute;left:707px;top:184px;width:1px;height:25px;background:#e5e5e5;"></div>
<div style="position:absolute;left:318px;top:275.5px;width:408px;height:21px;background:#cce8ff;border:1px solid #99d1ff;box-sizing:border-box"></div>
<div style="position:absolute;left:713px;top:185px;width:13px;height:200px;overflow:hidden">
<span class=t style="left:0px;top:5.64px;font-size:11px;color:#5b6470;font-weight:normal;">Type</span>
<span class=t style="left:0px;top:33.59px;font-size:11.5px;color:#6d6d6d;font-weight:normal;transform:scaleX(0.9300);">AVI</span>
<span class=t style="left:0px;top:53.84px;font-size:11.5px;color:#6d6d6d;font-weight:normal;transform:scaleX(0.9300);">AVI</span>
<span class=t style="left:0px;top:74.09px;font-size:11.5px;color:#6d6d6d;font-weight:normal;transform:scaleX(0.9300);">AVI</span>
<span class=t style="left:0px;top:94.34px;font-size:11.5px;color:#6d6d6d;font-weight:normal;transform:scaleX(0.9300);">AVI</span>
<span class=t style="left:0px;top:114.59px;font-size:11.5px;color:#6d6d6d;font-weight:normal;transform:scaleX(0.9300);">AVI</span>
<span class=t style="left:0px;top:134.84px;font-size:11.5px;color:#6d6d6d;font-weight:normal;transform:scaleX(0.9300);">AVI</span>
<span class=t style="left:0px;top:155.09px;font-size:11.5px;color:#6d6d6d;font-weight:normal;transform:scaleX(0.9300);">AVI</span>
<span class=t style="left:0px;top:175.34px;font-size:11.5px;color:#6d6d6d;font-weight:normal;transform:scaleX(0.9300);">AVI</span>
</div>
<svg style="left:323px;top:216.8px;" width="13" height="15" viewBox="0 0 13 15"><path d="M5.3 1H7.7L10.5 10H2.5Z" fill="#eab080"/><path d="M5.3 1H7.7L8.2 3.5H4.8Z" fill="#a06a38"/><path d="M4.3 6H8.7L9.3 8.5H3.7Z" fill="#c08a40"/><path d="M2.6 9H10.4L11.2 11.5H1.8Z" fill="#f8c8b0"/><path d="M1.2 11H11.8L12.5 15H0.5Z" fill="#e2760c"/><path d="M0.5 13.5H12.5V15H0.5Z" fill="#f09020"/></svg>
<span class=t style="left:341.2px;top:219.39px;font-size:11.5px;color:#1e1e1e;font-weight:normal;transform:scaleX(0.9258);">A.Star.is.Born.2018.avi</span>
<span class=t style="left:573.8px;top:218.94px;font-size:12px;color:#6a6a6a;font-weight:normal;transform:scaleX(0.9655);-webkit-text-stroke:0">24/03/2019 16:38</span>
<svg style="left:323px;top:237.05px;" width="13" height="15" viewBox="0 0 13 15"><path d="M5.3 1H7.7L10.5 10H2.5Z" fill="#eab080"/><path d="M5.3 1H7.7L8.2 3.5H4.8Z" fill="#a06a38"/><path d="M4.3 6H8.7L9.3 8.5H3.7Z" fill="#c08a40"/><path d="M2.6 9H10.4L11.2 11.5H1.8Z" fill="#f8c8b0"/><path d="M1.2 11H11.8L12.5 15H0.5Z" fill="#e2760c"/><path d="M0.5 13.5H12.5V15H0.5Z" fill="#f09020"/></svg>
<span class=t style="left:341.2px;top:239.64px;font-size:11.5px;color:#1e1e1e;font-weight:normal;transform:scaleX(0.9598);">Babysitting.2014.avi</span>
<span class=t style="left:573.8px;top:239.19px;font-size:12px;color:#6a6a6a;font-weight:normal;transform:scaleX(0.9655);-webkit-text-stroke:0">18/08/2014 23:36</span>
<svg style="left:323px;top:257.3px;" width="13" height="15" viewBox="0 0 13 15"><path d="M5.3 1H7.7L10.5 10H2.5Z" fill="#eab080"/><path d="M5.3 1H7.7L8.2 3.5H4.8Z" fill="#a06a38"/><path d="M4.3 6H8.7L9.3 8.5H3.7Z" fill="#c08a40"/><path d="M2.6 9H10.4L11.2 11.5H1.8Z" fill="#f8c8b0"/><path d="M1.2 11H11.8L12.5 15H0.5Z" fill="#e2760c"/><path d="M0.5 13.5H12.5V15H0.5Z" fill="#f09020"/></svg>
<span class=t style="left:341.2px;top:259.89px;font-size:11.5px;color:#1e1e1e;font-weight:normal;transform:scaleX(0.9280);">Barbecue.2014.avi</span>
<span class=t style="left:573.8px;top:259.44px;font-size:12px;color:#6a6a6a;font-weight:normal;transform:scaleX(0.9655);-webkit-text-stroke:0">23/04/2016 17:58</span>
<svg style="left:323px;top:277.55px;" width="13" height="15" viewBox="0 0 13 15"><path d="M5.3 1H7.7L10.5 10H2.5Z" fill="#eab080"/><path d="M5.3 1H7.7L8.2 3.5H4.8Z" fill="#a06a38"/><path d="M4.3 6H8.7L9.3 8.5H3.7Z" fill="#c08a40"/><path d="M2.6 9H10.4L11.2 11.5H1.8Z" fill="#f8c8b0"/><path d="M1.2 11H11.8L12.5 15H0.5Z" fill="#e2760c"/><path d="M0.5 13.5H12.5V15H0.5Z" fill="#f09020"/></svg>
<span class=t style="left:341.2px;top:280.14px;font-size:11.5px;color:#1e1e1e;font-weight:normal;transform:scaleX(0.9260);">Bohemian.Rhapsody.2018.avi</span>
<svg style="left:323px;top:297.8px;" width="13" height="15" viewBox="0 0 13 15"><path d="M5.3 1H7.7L10.5 10H2.5Z" fill="#eab080"/><path d="M5.3 1H7.7L8.2 3.5H4.8Z" fill="#a06a38"/><path d="M4.3 6H8.7L9.3 8.5H3.7Z" fill="#c08a40"/><path d="M2.6 9H10.4L11.2 11.5H1.8Z" fill="#f8c8b0"/><path d="M1.2 11H11.8L12.5 15H0.5Z" fill="#e2760c"/><path d="M0.5 13.5H12.5V15H0.5Z" fill="#f09020"/></svg>
<span class=t style="left:341.2px;top:300.39px;font-size:11.5px;color:#1e1e1e;font-weight:normal;transform:scaleX(0.9260);">Les.Gazelles.2014.avi</span>
<svg style="left:323px;top:318.05px;" width="13" height="15" viewBox="0 0 13 15"><path d="M5.3 1H7.7L10.5 10H2.5Z" fill="#eab080"/><path d="M5.3 1H7.7L8.2 3.5H4.8Z" fill="#a06a38"/><path d="M4.3 6H8.7L9.3 8.5H3.7Z" fill="#c08a40"/><path d="M2.6 9H10.4L11.2 11.5H1.8Z" fill="#f8c8b0"/><path d="M1.2 11H11.8L12.5 15H0.5Z" fill="#e2760c"/><path d="M0.5 13.5H12.5V15H0.5Z" fill="#f09020"/></svg>
<span class=t style="left:341.2px;top:320.64px;font-size:11.5px;color:#1e1e1e;font-weight:normal;transform:scaleX(0.9260);">Shutter.Island.2010.avi</span>
<svg style="left:323px;top:338.3px;" width="13" height="15" viewBox="0 0 13 15"><path d="M5.3 1H7.7L10.5 10H2.5Z" fill="#eab080"/><path d="M5.3 1H7.7L8.2 3.5H4.8Z" fill="#a06a38"/><path d="M4.3 6H8.7L9.3 8.5H3.7Z" fill="#c08a40"/><path d="M2.6 9H10.4L11.2 11.5H1.8Z" fill="#f8c8b0"/><path d="M1.2 11H11.8L12.5 15H0.5Z" fill="#e2760c"/><path d="M0.5 13.5H12.5V15H0.5Z" fill="#f09020"/></svg>
<span class=t style="left:341.2px;top:340.89px;font-size:11.5px;color:#1e1e1e;font-weight:normal;transform:scaleX(0.9260);">The Imitation Game.avi</span>
<svg style="left:325px;top:360.55px;" width="11" height="14" viewBox="0 0 11 14"><path d="M0.5 0.5H7.5L10.5 3.5V13.5H0.5Z" fill="#fafafa" stroke="#9a9a9a"/><circle cx="5.5" cy="7" r="3" fill="#2a8ab8"/><path d="M4.5 5.5L7 7L4.5 8.5Z" fill="#fff"/></svg>
<span class=t style="left:341.2px;top:361.14px;font-size:11.5px;color:#1e1e1e;font-weight:normal;transform:scaleX(0.9260);">WMPInfo.xml</span>
<div style="position:absolute;left:385px;top:281px;width:279px;height:350px;background:#eeeeee;border:1px solid #a0a0a0;box-sizing:border-box;box-shadow:2px 2px 2px rgba(0,0,0,0.25)"></div>
<div style="position:absolute;left:386px;top:350px;width:273px;height:22.5px;background:#ffffff;"></div>
<span class=t style="left:418.8px;top:290.55px;font-size:11px;color:#000;font-weight:bold;transform:scaleX(0.9511);">Lire</span>
<svg style="left:396px;top:310.5px;" width="13" height="15" viewBox="0 0 13 15"><path d="M5.3 1H7.7L10.5 10H2.5Z" fill="#eab080"/><path d="M5.3 1H7.7L8.2 3.5H4.8Z" fill="#a06a38"/><path d="M4.3 6H8.7L9.3 8.5H3.7Z" fill="#c08a40"/><path d="M2.6 9H10.4L11.2 11.5H1.8Z" fill="#f8c8b0"/><path d="M1.2 11H11.8L12.5 15H0.5Z" fill="#e2760c"/><path d="M0.5 13.5H12.5V15H0.5Z" fill="#f09020"/></svg>
<span class=t style="left:418.8px;top:312.05px;font-size:11px;color:#1a1a1a;font-weight:normal;transform:scaleX(0.9948);">Ajouter à la liste de lecture de VLC</span>
<svg style="left:396px;top:332.5px;" width="13" height="15" viewBox="0 0 13 15"><path d="M5.3 1H7.7L10.5 10H2.5Z" fill="#eab080"/><path d="M5.3 1H7.7L8.2 3.5H4.8Z" fill="#a06a38"/><path d="M4.3 6H8.7L9.3 8.5H3.7Z" fill="#c08a40"/><path d="M2.6 9H10.4L11.2 11.5H1.8Z" fill="#f8c8b0"/><path d="M1.2 11H11.8L12.5 15H0.5Z" fill="#e2760c"/><path d="M0.5 13.5H12.5V15H0.5Z" fill="#f09020"/></svg>
<span class=t style="left:418.8px;top:333.75px;font-size:11px;color:#1a1a1a;font-weight:normal;transform:scaleX(0.9465);">Lire avec VLC</span>
<span class=t style="left:418.8px;top:355.35px;font-size:11px;color:#1a1a1a;font-weight:normal;transform:scaleX(0.9913);">Lire sur l'appareil</span>
<svg style="left:647px;top:355px;" width="7" height="13" viewBox="0 0 7 13"><path d="M0.8 0.5L6.3 6.5L0.8 12.5" fill="none" stroke="#3a3a3a" stroke-width="1.1"/></svg>
<svg style="left:395px;top:379px;" width="15" height="9" viewBox="0 0 15 9"><path d="M3.5 9H12.5A2.5 2.5 0 0 0 13 4A3.8 3.8 0 0 0 6 2.5A3 3 0 0 0 1.5 5.5A2 2 0 0 0 3.5 9Z" fill="#1c6fc9"/></svg>
<span class=t style="left:418.4px;top:377.65px;font-size:11px;color:#1a1a1a;font-weight:normal;transform:scaleX(0.9627);">Déplacer vers OneDrive</span>
<span class=t style="left:418.4px;top:399.05px;font-size:11px;color:#1a1a1a;font-weight:normal;transform:scaleX(1.0374);">7-Zip</span>
<svg style="left:647px;top:399px;" width="7" height="13" viewBox="0 0 7 13"><path d="M0.8 0.5L6.3 6.5L0.8 12.5" fill="none" stroke="#3a3a3a" stroke-width="1.1"/></svg>
<span class=t style="left:418.4px;top:420.65px;font-size:11px;color:#1a1a1a;font-weight:normal;transform:scaleX(0.8987);">CRC SHA</span>
<svg style="left:647px;top:421px;" width="7" height="13" viewBox="0 0 7 13"><path d="M0.8 0.5L6.3 6.5L0.8 12.5" fill="none" stroke="#3a3a3a" stroke-width="1.1"/></svg>
<svg style="left:394px;top:440px;" width="17" height="16" viewBox="0 0 17 16"><rect x="0" y="0" width="17" height="16" fill="#1d6fc6"/><path d="M8.5 1.5L15 3.5V8C15 12 12 14.3 8.5 15.3C5 14.3 2 12 2 8V3.5Z" fill="#fff"/><path d="M8.5 1.5V15.3M2 8.5H15" stroke="#1d6fc6" stroke-width="0.9"/></svg>
<span class=t style="left:418.4px;top:442.25px;font-size:11px;color:#1a1a1a;font-weight:normal;transform:scaleX(0.9790);">Analyser avec Windows Defender...</span>
<svg style="left:394px;top:464px;" width="16" height="13" viewBox="0 0 16 13"><path d="M0.8 5V12.2H13.5V9" fill="none" stroke="#3a3a3a" stroke-width="1.1"/><path d="M4 10C4 6 7 4 11 4V1.2L15 5L11 8.8V6C8 6 5.5 7.5 4 10Z" fill="none" stroke="#3a3a3a" stroke-width="1.1"/></svg>
<span class=t style="left:418.4px;top:463.65px;font-size:11px;color:#1a1a1a;font-weight:normal;transform:scaleX(1.0141);">Partager</span>
<span class=t style="left:418.4px;top:486.85px;font-size:11px;color:#1a1a1a;font-weight:normal;transform:scaleX(0.9956);">Ouvrir avec</span>
<svg style="left:647px;top:486px;" width="7" height="13" viewBox="0 0 7 13"><path d="M0.8 0.5L6.3 6.5L0.8 12.5" fill="none" stroke="#3a3a3a" stroke-width="1.1"/></svg>
<span class=t style="left:418.4px;top:508.65px;font-size:11px;color:#1a1a1a;font-weight:normal;transform:scaleX(0.9767);">Restaurer les versions précédentes</span>
<div style="position:absolute;left:396px;top:527.5px;width:257px;height:1px;background:#a8a8a8;"></div>
<span class=t style="left:418.4px;top:537.04px;font-size:11px;color:#1a1a1a;font-weight:normal;transform:scaleX(0.9890);">Envoyer vers</span>
<svg style="left:647px;top:536px;" width="7" height="13" viewBox="0 0 7 13"><path d="M0.8 0.5L6.3 6.5L0.8 12.5" fill="none" stroke="#3a3a3a" stroke-width="1.1"/></svg>
<div style="position:absolute;left:396px;top:556px;width:257px;height:1px;background:#a8a8a8;"></div>
<span class=t style="left:418.4px;top:565.34px;font-size:11px;color:#1a1a1a;font-weight:normal;transform:scaleX(0.9701);">Couper</span>
<span class=t style="left:418.4px;top:587.04px;font-size:11px;color:#1a1a1a;font-weight:normal;transform:scaleX(1.0091);">Copier</span>
<div style="position:absolute;left:396px;top:606px;width:257px;height:1px;background:#a8a8a8;"></div>
<span class=t style="left:418.4px;top:613.54px;font-size:11px;color:#1a1a1a;font-weight:normal;transform:scaleX(0.9946);">Créer un raccourci</span>
<div style="position:absolute;left:763px;top:431px;width:22px;height:90px;background:#8c8c8c;"></div>
<div style="position:absolute;left:947px;top:431px;width:22px;height:90px;background:#8c8c8c;"></div>
<div style="position:absolute;left:768px;top:434.5px;width:12px;height:9.5px;background:#ffffff;"></div>
<div style="position:absolute;left:952px;top:434.5px;width:13px;height:9.5px;background:#ffffff;"></div>
<div style="position:absolute;left:768px;top:452.5px;width:12px;height:9.5px;background:#ffffff;"></div>
<div style="position:absolute;left:952px;top:452.5px;width:13px;height:9.5px;background:#ffffff;"></div>
<div style="position:absolute;left:768px;top:470.5px;width:12px;height:9.5px;background:#ffffff;"></div>
<div style="position:absolute;left:952px;top:470.5px;width:13px;height:9.5px;background:#ffffff;"></div>
<div style="position:absolute;left:768px;top:488.5px;width:12px;height:9.5px;background:#ffffff;"></div>
<div style="position:absolute;left:952px;top:488.5px;width:13px;height:9.5px;background:#ffffff;"></div>
<div style="position:absolute;left:768px;top:506.5px;width:12px;height:9.5px;background:#ffffff;"></div>
<div style="position:absolute;left:952px;top:506.5px;width:13px;height:9.5px;background:#ffffff;"></div>
<div style="position:absolute;left:785px;top:431px;width:162px;height:90px;background:#222222;"></div>
<div style="position:absolute;left:787px;top:436px;width:158px;height:81px;background:linear-gradient(126deg,#172017 0%,#1f291d 12%,#3a4434 22%,#6c6e5c 29%,#adaa99 35%,#d5d1c1 40%,#dcd8c9 100%)"></div>
<div style="position:absolute;left:797px;top:444px;width:40px;height:34px;background:radial-gradient(ellipse 18px 14px at 50% 50%,rgba(100,130,60,0.35),rgba(100,130,60,0))"></div>
<svg style="left:937px;top:488px;" width="35" height="38" viewBox="0 0 35 38"><path d="M15 0.5H20L28 28H7Z" fill="#f28a12"/><path d="M13.3 7H21.7L23 12H12Z" fill="#e8e8e8"/><path d="M11 15.5H24L25.5 21.5H9.5Z" fill="#e8e8e8"/><path d="M4 25H31L34.5 38H0.5Z" fill="#f39200"/><path d="M7 25H28L29 28H6Z" fill="#ffae40"/></svg>
<div style="position:absolute;left:659px;top:348px;width:269px;height:88px;background:#f0f0f0;border:1px solid #a0a0a0;box-sizing:border-box;box-shadow:2px 2px 2px rgba(0,0,0,0.2)"></div>
<svg style="left:670px;top:355px;" width="15" height="15" viewBox="0 0 15 15"><rect x="1" y="2" width="9" height="12" rx="1" fill="#e8e8e8" stroke="#888"/><rect x="3" y="4" width="4" height="8" fill="#cfcfcf"/><circle cx="11" cy="4" r="3.8" fill="#3cae3c"/><path d="M10 2.2L12.8 4L10 5.8Z" fill="#fff"/></svg>
<span class=t style="left:692.3px;top:357.25px;font-size:11px;color:#1a1a1a;font-weight:normal;transform:scaleX(1.0005);">décodeur TV d'Orange</span>
<div style="position:absolute;left:660px;top:374px;width:208px;height:24.5px;background:#f2e40a;"></div>
<svg style="left:669px;top:379px;" width="15" height="12" viewBox="0 0 15 12"><rect x="0" y="0" width="15" height="9.5" fill="#8a5a10"/><rect x="1.2" y="1.2" width="12.6" height="7" fill="#f08a30"/><circle cx="6" cy="4.7" r="1.6" fill="#d03020"/><path d="M8 4.7H11" stroke="#d05020" stroke-width="1"/><rect x="6" y="9.5" width="3" height="1.5" fill="#222"/><rect x="4" y="11" width="7" height="1" fill="#222"/></svg>
<span class=t style="left:692.3px;top:379.15px;font-size:11px;color:#1a1a1a;font-weight:normal;transform:scaleX(0.9742);">[LG] webOS TV SM8200PLA</span>
<svg style="left:664px;top:401px;" width="14" height="13" viewBox="0 0 14 13"><path d="M0 0.5L4 0V11.5L0 10.5Z" fill="#3a3a3a"/><path d="M3 1H13.5V12H3Z" fill="#4a4a4a"/><path d="M4.5 2.5H12.5V11H4.5Z" fill="#6e6e6e"/></svg>
<span class=t style="left:680.3px;top:400.15px;font-size:11px;color:#1a1a1a;font-weight:normal;transform:scaleX(0.9742);">[LG] webOS TV SM8200PLA</span>
<svg style="left:664px;top:419px;" width="14" height="13" viewBox="0 0 14 13"><path d="M0 0.5L4 0V11.5L0 10.5Z" fill="#3a3a3a"/><path d="M3 1H13.5V12H3Z" fill="#4a4a4a"/><path d="M4.5 2.5H12.5V11H4.5Z" fill="#6e6e6e"/></svg>
<span class=t style="left:680.3px;top:418.44px;font-size:11px;color:#1a1a1a;font-weight:normal;transform:scaleX(0.9933);">DIRECT-92-HP ENVY Photo 6200</span>
<div style="position:absolute;left:59px;top:624px;width:939px;height:2px;background:#180f6e;"></div>
<div style="position:absolute;left:996px;top:0px;width:2px;height:626px;background:#180f6e;"></div>
<div style="position:absolute;left:994px;top:2px;width:1px;height:622px;background:#8090a8;"></div>
<div style="position:absolute;left:995px;top:2px;width:1px;height:622px;background:#c4ccf0;"></div>
<div style="position:absolute;left:59px;top:0px;width:2px;height:626px;background:#180f6e;"></div>
</body></html>
